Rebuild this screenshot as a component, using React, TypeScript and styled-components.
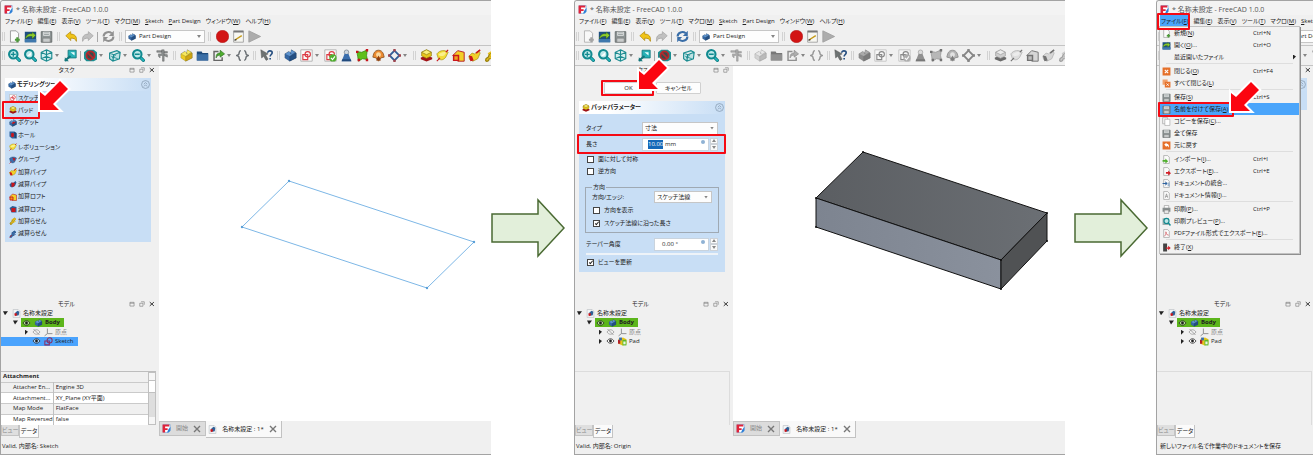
import React from "react";
import styled, { createGlobalStyle, css } from "styled-components";

const Global = createGlobalStyle`
  *, *::before, *::after { box-sizing: border-box; }
  body { margin: 0; background: #fff; }
  body, button, input, select, table {
    font-family: "Open Sans", "Noto Sans CJK JP", sans-serif;
    font-size: 6px;
    line-height: 9px;
    color: #222;
    font-feature-settings: "palt";
  }
  button { border: 0; padding: 0; margin: 0; background: none; white-space: nowrap; }
`;

/* ---------- page ---------- */
const Page = styled.main`
  display: grid;
  grid-template-columns: minmax(0, 491fr) 83fr minmax(0, 491fr) 91fr minmax(0, 157fr);
  min-height: 100vh;
`;
const Step = styled.div<{ $center?: boolean }>`
  display: flex;
  align-items: center;
  justify-content: ${(p) => (p.$center ? "center" : "flex-start")};
`;
const Window = styled.section`
  display: flex;
  flex-direction: column;
  background: #f0f0f0;
  border: solid #a3a3a3;
  border-width: 1px 0 1px 1px;
  border-top-left-radius: 3px;
  overflow: hidden;
`;
const TitleBar = styled.header`
  display: flex;
  align-items: center;
  gap: 3px;
  height: 14px;
  padding: 2px 0 0 3px;
  background: #f3f3f3;
  color: #555;
  font-size: 7px;
  white-space: nowrap;
`;
const MenuBar = styled.nav`
  display: flex;
  align-items: center;
  gap: 5px;
  height: 13px;
  padding-left: 4px;
  white-space: nowrap;
`;
const MenuHost = styled.div`
  position: relative;
`;
const MenuTitle = styled.button<{ $open?: boolean }>`
  display: block;
  height: 11px;
  ${(p) =>
    p.$open &&
    css`
      background: #4aa5fb;
      box-shadow: 0 0 0 1px #4aa5fb;
    `}
`;
const Toolbar = styled.div<{ $tall?: boolean }>`
  --grip: ${(p) => (p.$tall ? "8px" : "9px")};
  --sep: ${(p) => (p.$tall ? "4px" : "5px")};
  display: flex;
  align-items: center;
  height: ${(p) => (p.$tall ? "20px" : "18px")};
  border-bottom: 1px solid #c4c4c4;
  overflow: hidden;
`;
const Grip = styled.i`
  flex: none;
  width: var(--grip);
  height: 9px;
  background: linear-gradient(90deg, #d2d2d2 1px, transparent 1px 2px, #d2d2d2 2px) center / 3px 9px no-repeat;
  &:first-child { width: 5px; }
`;
const Sep = styled.i`
  flex: none;
  width: var(--sep);
  height: 10px;
  background: linear-gradient(#a8a8a8, #a8a8a8) center / 1px 100% no-repeat;
`;
const Tool = styled.button<{ $off?: boolean }>`
  flex: none;
  display: flex;
  align-items: center;
  justify-content: center;
  width: 16px;
  height: 16px;
  ${(p) => p.$off && css`filter: grayscale(1) opacity(0.7);`}
`;
const Caret = styled.i`
  flex: none;
  width: 8px;
  height: 3px;
  background: #858585;
  clip-path: polygon(1px 0, 5px 0, 3px 3px);
`;

/* ---------- combo boxes ---------- */
const Combo = styled.label<{ $w: number; $h?: number }>`
  flex: none;
  display: flex;
  align-items: center;
  width: ${(p) => p.$w}px;
  height: ${(p) => p.$h || 12}px;
  padding: 0 0 0 2px;
  background: #fdfdfd;
  border: 1px solid #c6c6c6;
  gap: 3px;
`;
const Select = styled.select`
  flex: 1;
  min-width: 0;
  height: 10px;
  padding: 0;
  appearance: none;
  border: 0;
  background: none;
`;

/* ---------- body ---------- */
const Body = styled.div`
  flex: 1;
  display: flex;
`;
const Dock = styled.aside`
  position: relative;
  flex: 0 0 158px;
  display: flex;
  flex-direction: column;
  background: #f0f0f0;
`;
const TaskArea = styled.div`
  flex: 1;
  padding-bottom: 12px;
`;
const DockTitle = styled.div`
  display: flex;
  align-items: center;
  height: 9px;
  padding: 0 3px;
  > span { flex: 1; text-align: center; }
`;
const DockButtons = styled.div`
  display: flex;
  gap: 3px;
`;
const DockButton = styled.button`
  width: 7px;
  height: 7px;
  display: flex;
`;
const Panel = styled.section`
  margin: 3px 8px 0 4px;
  background: #c8def5;
`;
const PanelHead = styled.h2`
  display: flex;
  align-items: center;
  gap: 1px;
  height: 13px;
  margin: 0;
  padding: 0 1px 0 3px;
  background: linear-gradient(90deg, #fff 20%, #c8def5);
  font-size: 6px;
  font-weight: 600;
  > span { flex: 1; }
`;
const TaskList = styled.div<{ $short?: boolean }>`
  display: grid;
  grid-auto-rows: 1fr;
  min-height: ${(p) => (p.$short ? "19px" : "151px")};
  padding: 1px 0 2px;
`;
const TaskItem = styled.div`
  position: relative;
  display: flex;
  align-items: center;
  > button { display: flex; align-items: center; gap: 1px; margin-left: 4px; }
`;
const Mark = styled.i<{ $l: number; $t: number; $w: number; $h: number }>`
  position: absolute;
  z-index: 4;
  left: ${(p) => p.$l}px;
  top: ${(p) => p.$t}px;
  width: ${(p) => p.$w}px;
  height: ${(p) => p.$h}px;
  border: 2px solid #f50a14;
  border-radius: 1px;
  pointer-events: none;
`;
const Pointer = styled.svg<{ $l: number; $t: number }>`
  position: absolute;
  z-index: 5;
  left: ${(p) => p.$l}px;
  top: ${(p) => p.$t}px;
  overflow: visible;
  pointer-events: none;
`;

/* ---------- pad form ---------- */
const Actions = styled.div`
  position: relative;
  display: flex;
  gap: 3px;
  margin: 7px 0 7px 29px;
`;
const PushButton = styled.button<{ $w: number }>`
  width: ${(p) => p.$w}px;
  height: 12px;
  background: #fdfdfd;
  border: 1px solid #d0d0d0;
  border-radius: 1px;
`;
const Form = styled.form`
  display: flex;
  flex-direction: column;
  gap: 2px;
  padding: 7px 7px 4px;
`;
const Field = styled.div<{ $h?: number }>`
  position: relative;
  display: flex;
  align-items: center;
  height: ${(p) => p.$h || 14}px;
  > label:first-child, > span:first-child { flex: 1; }
`;
const Spin = styled.div<{ $w: number }>`
  display: flex;
  align-items: center;
  width: ${(p) => p.$w}px;
  height: 13px;
  padding-left: 5px;
  background: #fff;
  border: 1px solid #c9d3dd;
  gap: 2px;
`;
const NumberBox = styled.input<{ $picked?: boolean }>`
  width: ${(p) => (p.$picked ? 15 : 20)}px;
  height: 9px;
  padding: 0;
  border: 0;
  text-align: center;
  background: ${(p) => (p.$picked ? "#1467b8" : "none")};
  color: ${(p) => (p.$picked ? "#fff" : "#222")};
`;
const Fx = styled.i`
  width: 4px;
  height: 4px;
  margin: 0 3px 5px auto;
  border-radius: 50%;
  background: #8fb2d4;
`;
const Steps = styled.div`
  display: flex;
  flex-direction: column;
  width: 8px;
  height: 13px;
  margin-left: 1px;
  > button {
    flex: 1;
    display: flex;
    align-items: center;
    justify-content: center;
    background: #fafafa;
    border: 1px solid #cdd2d8;
  }
`;
const Checks = styled.div`
  display: flex;
  flex-direction: column;
`;
const Check = styled.label`
  display: flex;
  align-items: center;
  gap: 4px;
  height: 12px;
  padding-left: 1px;
  > input {
    appearance: none;
    width: 7px;
    height: 7px;
    margin: 0;
    border: 1px solid #444;
    background: #fff;
  }
  > input:checked::after {
    content: "";
    display: block;
    width: 2px;
    height: 4px;
    margin-left: 2px;
    border: solid #222;
    border-width: 0 1px 1px 0;
    transform: rotate(40deg);
  }
`;
const Group = styled.fieldset`
  display: flex;
  flex-direction: column;
  gap: 1px;
  min-width: 0;
  margin: 4px -1px 2px;
  padding: 0 6px 3px;
  border: 1px solid #9fa9b3;
  > legend { height: 8px; line-height: 8px; padding: 0 1px; }
`;
const Rule = styled.hr`
  width: 100%;
  height: 2px;
  margin: 0 0 -1px;
  border: 0;
  background: #eef3f8;
`;

/* ---------- model tree ---------- */
const Tree = styled.div`
  display: grid;
  grid-template-rows: repeat(4, 1fr);
  justify-items: start;
  height: 37px;
  margin-bottom: 25px;
`;
const Node = styled.div<{ $depth: number; $tone?: string }>`
  display: flex;
  align-items: center;
  padding-left: ${(p) => p.$depth * 10}px;
  background: ${(p) => (p.$tone === "picked" ? "#4aa3fd" : "none")};
  color: ${(p) => (p.$tone === "dim" ? "#888" : "#222")};
`;
const Twist = styled.i<{ $open?: boolean }>`
  width: 10px;
  height: 5px;
  background: #222;
  clip-path: ${(p) => (p.$open ? "polygon(2px 0, 7px 0, 4px 4px)" : "polygon(4px 0, 7px 2px, 4px 5px)")};
`;
const NodeLabel = styled.span<{ $active?: boolean }>`
  display: flex;
  align-items: center;
  height: 9px;
  padding-right: 4px;
  background: ${(p) => (p.$active ? "#5cb51b" : "none")};
  font-weight: ${(p) => (p.$active ? 700 : 400)};
  > svg { width: 11px; margin-right: 1px; }
`;
const Props = styled.div<{ $empty?: boolean }>`
  display: flex;
  height: 54px;
  overflow: hidden;
  border-top: 1px solid ${(p) => (p.$empty ? "#dcdcdc" : "#bdbdbd")};
  margin-right: 3px;
  ${(p) => p.$empty && css`border-right: 1px solid #dcdcdc;`}
`;
const Table = styled.table`
  flex: 1;
  table-layout: fixed;
  border-collapse: collapse;
  td, th { height: 10px; padding: 0; text-align: left; font-weight: 400; line-height: 9px; white-space: nowrap; overflow: hidden; }
  thead th { height: 10px; padding-left: 2px; font-weight: 700; }
  tbody th { width: 51px; padding-left: 12px; border-right: 1px solid #c0c0c0; border-top: 1px solid #cacaca; }
  tbody td { padding-left: 2px; border-top: 1px solid #cacaca; }
  tbody tr:nth-child(even) { background: #fff; }
`;
const Scroll = styled.div`
  width: 8px;
  display: flex;
  flex-direction: column;
  background: #dedede;
  border: 1px solid #c0c0c0;
  > i { height: 7px; background: #f6f6f6; }
  > b { height: 13px; background: #fff; border: solid #c0c0c0; border-width: 1px 0; margin-bottom: auto; }
`;
const SideTabs = styled.div`
  display: flex;
  align-items: flex-start;
  height: 13px;
`;
const SideTab = styled.button<{ $on?: boolean }>`
  width: ${(p) => (p.$on ? 20 : 18)}px;
  height: ${(p) => (p.$on ? 13 : 11)}px;
  background: ${(p) => (p.$on ? "#fbfbfb" : "#dfdfdf")};
  color: ${(p) => (p.$on ? "#222" : "#888")};
  border: solid #c4c4c4;
  border-width: 0 1px 1px;
`;

/* ---------- 3D view ---------- */
const Work = styled.div`
  flex: 1;
  min-width: 0;
  display: flex;
  flex-direction: column;
`;
const Canvas = styled.svg`
  flex: 1;
  display: block;
  width: 100%;
  min-height: 0;
  background: #fff;
`;
const DocTabs = styled.div`
  display: flex;
  align-items: flex-start;
  height: 17px;
`;
const DocTab = styled.button<{ $on?: boolean }>`
  flex: none;
  display: flex;
  align-items: center;
  justify-content: space-between;
  width: ${(p) => (p.$on ? 76 : 47)}px;
  height: ${(p) => (p.$on ? 17 : 15)}px;
  padding: 0 4px 0 2px;
  background: ${(p) => (p.$on ? "#f9f9f9" : "#dcdcdc")};
  color: ${(p) => (p.$on ? "#222" : "#888")};
  border: solid #c2c2c2;
  border-width: ${(p) => (p.$on ? "0 1px 1px 0" : "1px")};
`;
const StatusBar = styled.footer<{ $hint?: boolean }>`
  height: 16px;
  padding-left: ${(p) => (p.$hint ? 3 : 1)}px;
  line-height: 16px;
  white-space: nowrap;
`;

/* ---------- file menu ---------- */
const Dropdown = styled.div`
  position: absolute;
  z-index: 3;
  top: 11px;
  left: -1px;
  width: 139px;
  background: #f2f2f2;
  box-shadow: 0 0 0 1px #c2c2c2, 1px 1px 0 1px #8f8f8f;
`;
const MenuRow = styled.div`
  position: relative;
`;
const MenuEntry = styled.button<{ $hot?: boolean }>`
  display: grid;
  grid-template-columns: 14px 79px 1fr;
  align-items: center;
  width: 100%;
  height: 12px;
  text-align: left;
  background: ${(p) => (p.$hot ? "#4aa5fb" : "none")};
  > svg { margin-left: 2px; }
`;
const Divider = styled.hr`
  height: 2px;
  margin: 0 6px;
  border: 0;
  border-top: 1px solid #dedede;
`;
const SubArrow = styled.i`
  width: 4px;
  height: 5px;
  margin-left: 40px;
  background: #222;
  clip-path: polygon(0 0, 3px 2px, 0 5px);
`;

/* ---------- icons ---------- */
const lens = (extra?: React.ReactNode) => (
  <>
    <path d="M9.500 9.500l4.500 4.500" stroke="#0f7a80" strokeWidth="4" strokeLinecap="round" />
    <path d="M9.500 9.500l4.500 4.500" stroke="#22b6bc" strokeWidth="2" strokeLinecap="round" />
    <circle cx="6.500" cy="6.500" r="5.200" fill="#bfe9ea" stroke="#128a90" strokeWidth="2.600" />
    {extra}
  </>
);
const block = (top: string, left: string, right: string) => (
  <g stroke="#1a2430" strokeOpacity=".35" strokeWidth=".6">
    <path d="M1 6l5-3v3l3-2V1l5 3 1 1v6l-8 4-6-4z" fill={left} />
    <path d="M1 6l5-3 2 1v2l2-1 4-1-7 5z" fill={top} />
    <path d="M9 1l5 3-4 2.500L8 5z" fill={top} />
    <path d="M7 9.500L15 5v6l-8 4z" fill={right} />
  </g>
);
const page = <path d="M3 1h7l3 3v11H3z" fill="#fbfbfb" stroke="#8b8b8b" />;
const floppy = (
  <>
    <path d="M1.500 2h13v13h-13z" fill="#8d9494" stroke="#5f6565" />
    <path d="M4 2h8v5H4z" fill="#e8eaea" />
    <path d="M5 3.500h6M5 5.500h6" stroke="#8d9494" />
    <path d="M3.500 10h9v5h-9z" fill="#c9cccc" stroke="#777" strokeWidth=".7" />
  </>
);
const sketchMark = (
  <g fill="none" stroke="#dc3a44" strokeWidth="1.400">
    <path d="M3.500 7h6v6h-6z" />
    <circle cx="9.500" cy="6.500" r="3.300" />
  </g>
);
const sketchPage = <path d="M1 1h14v14H1z" fill="#fafafa" stroke="#aaa" />;

const glyphs: Record<string, React.ReactNode> = {
  app: (
    <>
      <path d="M2 1h12.500v8L10 15H2z" fill="#fff" stroke="#5b95d6" />
      <path d="M1 1h12v3.500H5.500v3H10v3H5.500V15H1z" fill="#e0233a" />
      <path d="M9 15l2-5 4-5v7l-3 3z" fill="#2e7fd6" />
    </>
  ),
  fresh: <>{page}<path d="M11.500 9v6M8.500 12h6" stroke="#4e9a3a" strokeWidth="2.600" /></>,
  open: (
    <>
      <path d="M1 2h14v13H1z" fill="#1d4f80" />
      <path d="M2 9c2-4 5-5 8-4V2.500l4.500 4L10 11V8C7 7.500 4 8 2 11z" fill="#8fce2c" stroke="#2f5c10" strokeWidth=".5" />
      <path d="M1 11h14v4H1z" fill="#3f78ad" />
    </>
  ),
  save: floppy,
  undo: <path d="M1 7l6-5v3c5 0 8 3 7 9-1-3-3-4-7-4v3z" fill="#f0c419" stroke="#a98100" strokeWidth=".8" />,
  redo: <path d="M15 7L9 2v3c-5 0-8 3-7 9 1-3 3-4 7-4v3z" fill="#acacac" stroke="#7b7b7b" strokeWidth=".8" />,
  reload: (
    <>
      <path d="M2 8c0-5 6-7 10-4M14 8c0 5-6 7-10 4" fill="none" stroke="#3a6ea8" strokeWidth="2.600" />
      <path d="M14.500 1v6.500H8.500zM1.500 15V8.500h6z" fill="#3a6ea8" />
    </>
  ),
  record: <circle cx="8" cy="8" r="7.700" fill="#d21414" stroke="#a80f0f" strokeWidth=".6" />,
  macro: (
    <>
      <path d="M2 1h12v14H2z" fill="#f7f7f2" stroke="#999" />
      <path d="M2 2h12" stroke="#777" strokeWidth="2" />
      <path d="M4 12l8-5" stroke="#c59a1a" strokeWidth="1.800" />
      <path d="M3 12.500l2.500-.5" stroke="#222" strokeWidth="1.500" />
    </>
  ),
  play: <path d="M1 1L15.500 8 1 15z" fill="#8f8f8f" stroke="#7d7d7d" />,
  zoomFit: lens(<path d="M6.500 3.500v6M3.500 6.500h6" stroke="#128a90" strokeWidth="1.600" />),
  zoomSel: lens(<path d="M3.500 9l5-5v4z" fill="#fff" />),
  cube: (
    <path d="M8 1l6.500 3v8L8 15l-6.500-3V4zM1.500 4L8 7l6.500-3M8 7v8M8 1v6M1.500 12L8 9l6.500 3" fill="#d3eeee" stroke="#1b8b90" strokeWidth="1.400" />
  ),
  link: (
    <>
      <path d="M5 1.500h10V11H5z" fill="#27b0b5" stroke="#13767b" />
      <path d="M8 4h5v4z" fill="#e8ffff" />
      <path d="M1 14.500l7-6" stroke="#13767b" strokeWidth="2.400" />
      <path d="M1 10v5h5z" fill="#13767b" />
    </>
  ),
  deny: (
    <>
      <path d="M4 1h8l4 3v9l-4 2H3l-3-3V4z" fill="#1b8f92" />
      <circle cx="8" cy="8" r="5" fill="#3b4a4a" stroke="#b5282c" strokeWidth="2.200" />
      <path d="M4.500 4.500l7 7" stroke="#b5282c" strokeWidth="2.200" />
    </>
  ),
  wire: (
    <>
      <path d="M2 5l9-3 4 2-1 8-8 3-4-3zM2 5l5 2 8-3M7 7l-1 8" fill="#bfe3e4" stroke="#1b8b90" strokeWidth="1.400" />
      <path d="M5 11l5-4M4 9l8 3" stroke="#1b8b90" />
    </>
  ),
  zoomPage: lens(<path d="M3.500 6.500h6" stroke="#128a90" strokeWidth="2" />),
  caliper: (
    <path d="M7 1h3v14H8V8H5v3L3 9V6h4zM10 3h4v2h-4zM10 6l4 1v3l-4-2zM1 2h6v2H1z" fill="#8b9090" stroke="#666" strokeWidth=".6" />
  ),
  part: block("#f8e95e", "#edcb22", "#cfa512"),
  folder: <><path d="M1 3h6l1 2h7v9H1z" fill="#1f4b7c" /><path d="M1 6.500h14V14H1z" fill="#3c6fa6" /></>,
  share: (
    <>
      <path d="M8 3H2.500v11h10V10" fill="none" stroke="#666" strokeWidth="1.800" />
      <path d="M5 11c0-5 2-6 5-6V1.500L15.500 6 10 10V7.500c-2 0-4 1-5 3.500z" fill="#4fae2e" stroke="#24631a" strokeWidth=".7" />
    </>
  ),
  braces: (
    <path d="M6 2C3 2 4.500 6 3 7L1 8l2 1c1.500 1 0 5 3 5M10 2c3 0 1.500 4 3 5l2 1-2 1c-1.500 1 0 5-3 5" fill="none" stroke="#6b7074" strokeWidth="1.800" />
  ),
  help: (
    <>
      <path d="M1 1l9 5-3 1.500 3 5-2.500 1.500-3-5L2 11z" fill="#6d7272" stroke="#555" strokeWidth=".6" />
      <path d="M9.500 4.500c0-3 5.500-3 5.500.2 0 2-2.500 2.300-2.500 4.600M12.500 11v2" fill="none" stroke="#274f80" strokeWidth="2" />
    </>
  ),
  body: block("#5f94cf", "#3568a5", "#234f84"),
  sketch: <>{sketchPage}{sketchMark}</>,
  sketchOk: <>{sketchPage}{sketchMark}<circle cx="11" cy="11" r="4.500" fill="#4fae2e" /><path d="M8.500 11l2 2 3-4" stroke="#fff" strokeWidth="1.400" fill="none" /></>,
  weight: (
    <>
      <circle cx="8" cy="4" r="2.800" fill="#ccd5de" stroke="#7e8894" />
      <path d="M5.500 6h5L14 15H2z" fill="#3a6dac" />
      <path d="M2.800 12.500h10.400L14 15H2z" fill="#224a7c" />
    </>
  ),
  patch: (
    <>
      <path d="M1 3l6 1 7-3-1 7 1 5-6-1-5 3-1-6z" fill="#5fbf1b" stroke="#2c7d0b" strokeWidth=".8" />
      <path d="M0 2h3v3H0zM12 0h3v3h-3zM12 12h3v3h-3zM2 12h3v3H2z" fill="#c4161c" />
    </>
  ),
  datum: (
    <>
      <path d="M2 6c2-6 10-6 12 0l1 4-4 1-3 4-3-4-4-1z" fill="#ec8a30" stroke="#8a5422" />
      <circle cx="8" cy="7" r="3" fill="#fbd9a0" />
      <path d="M8 8l3 6H5z" fill="#8c3c10" />
    </>
  ),
  diamond: (
    <>
      <path d="M8 2l6 6-6 6-6-6z" fill="none" stroke="#2f5f9a" strokeWidth="2.200" />
      <path d="M6.500 0h3v3h-3zM6.500 13h3v3h-3zM0 6.500h3v3H0zM13 6.500h3v3h-3z" fill="#a0464e" />
    </>
  ),
  pad: (
    <>
      <path d="M1 10.500l7-2 7 2v2l-7 3-7-3z" fill="#a01317" />
      <path d="M2 4l6-3 6 3v4.500l-6 3-6-3z" fill="#e8c51b" stroke="#8b7510" strokeWidth=".8" />
      <path d="M2 4l6-3 6 3-6 3z" fill="#faef78" stroke="#8b7510" strokeWidth=".8" />
    </>
  ),
  pocket: <>{block("#5f94cf", "#3568a5", "#234f84")}<path d="M5 8l5-3 3 2-5 3z" fill="#c9161c" /></>,
  hole: (
    <>
      <path d="M1 1h9l5 3v11H6l-5-4z" fill="#2f629c" />
      <ellipse cx="7" cy="8" rx="3" ry="4.500" fill="#c9161c" />
      <path d="M10 1l5 3v11l-4-2z" fill="#1f4675" />
    </>
  ),
  revolve: (
    <>
      <path d="M1 6c4-5 10-5 14-2l-3 6c-3 4-6 4-9 2z" fill="#f3de3a" stroke="#a38c14" strokeWidth=".8" />
      <path d="M3 7c3-3 6-4 10-3l-3 4c-3 1-5 1-7-1z" fill="#faf08c" />
      <path d="M1 15l4-4M12 4l3-3" stroke="#c9161c" strokeWidth="1.400" />
    </>
  ),
  groove: (
    <>
      <path d="M1 5c4-4 10-4 14-1l-3 7c-3 4-6 3-9 1z" fill="#3a70ae" stroke="#1f4675" strokeWidth=".8" />
      <path d="M7 3l6 2-3 6z" fill="#c9161c" />
      <path d="M1 15l4-4" stroke="#c9161c" strokeWidth="1.400" />
    </>
  ),
  loft: (
    <>
      <path d="M1 8l6-6 8 2v11H7z" fill="#f3cf28" stroke="#b8242a" strokeWidth="1.200" />
      <path d="M2 8h6v6H2z" fill="#f0a01f" stroke="#c9161c" strokeWidth="1.800" />
    </>
  ),
  loftCut: (
    <>
      <path d="M1 6l6-4 8 2v11H5z" fill="#2d5b92" />
      <path d="M5 6h8v8H5z" fill="#c9161c" />
    </>
  ),
  pipe: (
    <>
      <path d="M1 9l4-4 3 1 5-4 2 3-3 7-6 3-4-2z" fill="#f1d02a" stroke="#a38c14" strokeWidth=".8" />
      <path d="M1 8l4 1 2 5-4 1z" fill="#c9161c" />
      <path d="M10 5l5-4" stroke="#c9161c" strokeWidth="2" />
    </>
  ),
  pipeCut: (
    <>
      <path d="M1 9l4-4 3 1 5-4 2 3-3 7-6 3-4-2z" fill="#2d5b92" />
      <path d="M5 5l7 1-2 7-5 1z" fill="#c9161c" />
    </>
  ),
  helix: (
    <>
      <path d="M2 14c0-5 4-2 4-6s4-2 4-5 3 0 3 2-4 2-4 5-3 1-3 3-3 3-4 1z" fill="#e6bf1b" stroke="#9a8210" strokeWidth="1.600" />
      <path d="M5 6l5-3 4 2M7 11l6-2" stroke="#e6bf1b" strokeWidth="2" />
    </>
  ),
  helixCut: (
    <>
      <path d="M2 14c0-5 4-2 4-6s4-2 4-5 3 0 3 2-4 2-4 5-3 1-3 3-3 3-4 1z" fill="#3a6dac" stroke="#2d5b92" strokeWidth="1.600" />
      <path d="M5 6l5-3 4 2M7 11l6-2" stroke="#2d5b92" strokeWidth="2" />
      <path d="M1 15l5-5" stroke="#c9161c" strokeWidth="1.400" />
    </>
  ),
  doc: (
    <>
      <path d="M2 1h9l3 3v11H2z" fill="#f4f6f8" stroke="#b0b5ba" />
      <path d="M6 6l4-3 3 2-1 6-4 1-2-2z" fill="#2f5f96" />
      <path d="M4 8l4-1 1 4-4 2z" fill="#c9161c" />
    </>
  ),
  eye: (
    <>
      <path d="M1 8c4-6 10-6 14 0-4 6-10 6-14 0z" fill="#fff" fillOpacity=".5" stroke="#222" strokeWidth="1.500" />
      <circle cx="8" cy="8" r="2.800" fill="#222" />
    </>
  ),
  eyeOff: (
    <>
      <path d="M1 8c4-6 10-6 14 0-4 6-10 6-14 0z" fill="none" stroke="#888" strokeWidth="1.300" />
      <path d="M2 2l12 12" stroke="#888" strokeWidth="1.400" />
    </>
  ),
  axes: <path d="M6 1v9h9M6 10l-5 4" fill="none" stroke="#888" strokeWidth="1.600" />,
  sketchNode: (
    <g fill="none" stroke="#8a2f63" strokeWidth="1.800">
      <path d="M1.500 7h8v7h-8z" />
      <circle cx="10" cy="6" r="4.500" />
    </g>
  ),
  padNode: (
    <>
      <path d="M1 3l8-2 6 3v9l-7 2-7-3z" fill="#e8c51b" />
      <path d="M0 5h4v7H0z" fill="#b32025" />
      <path d="M2 1h5v5H2z" fill="#3a6dac" />
      <path d="M8 5h7v10H8z" fill="#5cb92c" />
      <path d="M9.500 8h4v5h-4z" fill="#eaf6e2" />
    </>
  ),
  close: <><path d="M1 1h14v14H1z" fill="#e5702a" /><path d="M5 5l6 6M11 5l-6 6" stroke="#fff" strokeWidth="2" /></>,
  closeAll: <><path d="M1 1h9v9H1z" fill="#f0a06c" /><path d="M5 5h10v10H5z" fill="#e5702a" /><path d="M8 8l4 4M12 8l-4 4" stroke="#fff" strokeWidth="1.600" /></>,
  copy: <><path d="M1 1h9v11H1z" fill="#eee" stroke="#999" /><path d="M5 4h9v11H5z" fill="#fff" stroke="#999" /></>,
  revert: <><path d="M1 1h14v14H1z" fill="#e5702a" /><path d="M4 6l4-3v2c4 0 5 3 4 7-1-3-2-3-4-3v2z" fill="#fff" /></>,
  importFile: <>{page}<path d="M1 9h5V6l5 5-5 4v-3H1z" fill="#4fae2e" /></>,
  exportFile: <>{page}<path d="M7 9h4V6l5 5-5 4v-3H7z" fill="#d32029" /></>,
  merge: <>{page}<path d="M1 7h5V4l4 4-4 4V9H1z" fill="#2f639f" /><path d="M10 6h4v7h-4z" fill="#9bb3cd" /></>,
  info: <>{page}<path d="M6 12l2-7 2 7M6 9.500h4" stroke="#888" strokeWidth="1.200" fill="none" /></>,
  print: <><path d="M4 1h8v5H4z" fill="#fff" stroke="#888" /><path d="M1 5h14v7H1z" fill="#8a9090" /><path d="M4 9h8v6H4z" fill="#e8e8e8" stroke="#777" /></>,
  preview: <><path d="M1 2h11v12H1z" fill="#9aabab" /><circle cx="8" cy="7" r="4.500" fill="#bfe6e6" stroke="#128a90" strokeWidth="2" /><path d="M11 10l4 5" stroke="#128a90" strokeWidth="2.500" /></>,
  pdf: <>{page}<path d="M4 13c4-3 4-8 3-8s0 6 5 6" fill="none" stroke="#d0535a" strokeWidth="1.300" /></>,
  quit: <><path d="M2 1h7v14H2z" fill="#444" /><path d="M7 8h4V5l4.500 4-4.500 4v-3H7z" fill="#d32029" /></>,
  x: <path d="M2 2l12 12M14 2L2 14" stroke="#777" strokeWidth="2.800" />,
  float: <path d="M2.500 3.500h11v10h-11zM2.500 6h11" fill="none" stroke="#777" strokeWidth="1.600" />,
  restore: <path d="M5.500 2h8.500v8M2 6h8.500v8H2z" fill="none" stroke="#777" strokeWidth="1.600" />,
  shut: <path d="M2 3l11 10M13 3L2 13" stroke="#333" strokeWidth="2.600" />,
  fold: (
    <g fill="none" stroke="#7f93a8" strokeWidth="1.200">
      <circle cx="8" cy="8" r="7" />
      <path d="M5 7.500l3-3 3 3M5 11.500l3-3 3 3" />
    </g>
  ),
};

const Icon = ({ name, size = 12 }: { name: string; size?: number }) => (
  <svg width={size} height={size} viewBox="0 0 16 16" fill="none" aria-hidden="true">
    {glyphs[name]}
  </svg>
);

const RedArrow = ({ l, t }: { l: number; t: number }) => (
  <Pointer $l={l} $t={t} width="34" height="34" viewBox="0 0 34 34" aria-hidden="true">
    <path
      d="M2 31V13l5 4L22 2l8 8-15 15 6 6z"
      fill="#fb0510"
      stroke="#fff"
      strokeWidth="4"
      paintOrder="stroke"
      strokeLinejoin="miter"
    />
  </Pointer>
);

const GreenArrow = () => (
  <svg width="74" height="60" viewBox="0 0 74 60" aria-hidden="true">
    <path d="M1 16h46V2l26 28-26 28V44H1z" fill="#e2efda" stroke="#4a6a33" strokeWidth="1.500" />
  </svg>
);

/* ---------- shared window parts ---------- */
const K = ({ children }: { children: string }) => (
  <>
    (<u>{children}</u>)
  </>
);

const menus: [string, React.ReactNode][] = [
  ["file", <>ファイル<K>F</K></>],
  ["edit", <>編集<K>E</K></>],
  ["view", <>表示<K>V</K></>],
  ["tools", <>ツール<K>T</K></>],
  ["macro", <>マクロ<K>M</K></>],
  ["sketch", <><u>S</u>ketch</>],
  ["part", <><u>P</u>art Design</>],
  ["window", <>ウィンドウ<K>W</K></>],
  ["help", <>ヘルプ<K>H</K></>],
];

const mainTools = ["|", "fresh", "open", "save", "|", "undo", "redo", "/", "reload", "|", "combo", "|", "record", "macro", "play"];
const viewTools = [
  "|", "zoomFit", "zoomSel", "cube", "v", "link", "/", "deny", "v", "wire", "v", "zoomPage", "v", "caliper",
  "|", "part", "folder", "share", "v", "braces", "|", "help", "|", "body", "sketch", "v", "sketchOk", "weight",
  "patch", "datum", "diamond", "v", "|", "pad", "revolve", "loft", "pipe", "helix",
];

const Tools = ({ items, off, tall }: { items: string[]; off: string[]; tall?: boolean }) => (
  <Toolbar $tall={tall}>
    {items.map((t, i) => {
      if (t === "|") return <Grip key={i} />;
      if (t === "/") return <Sep key={i} />;
      if (t === "v") return <Caret key={i} />;
      if (t === "combo")
        return (
          <Combo key={i} $w={80} $h={13}>
            <Icon name="body" size={8} />
            <Select aria-label="Workbench">
              <option>Part Design</option>
            </Select>
            <Caret />
          </Combo>
        );
      return (
        <Tool key={i} aria-label={t} $off={off.includes(t)}>
          <Icon name={t} size={13} />
        </Tool>
      );
    })}
  </Toolbar>
);

const DockHead = ({ title, icons = ["float", "restore", "shut"] }: { title: string; icons?: string[] }) => (
  <DockTitle>
    <span>{title}</span>
    <DockButtons>
      {icons.map((n) => (
        <DockButton key={n} aria-label={n}>
          <Icon name={n} size={6} />
        </DockButton>
      ))}
    </DockButtons>
  </DockTitle>
);

const Model = ({ sketch }: { sketch?: boolean }) => (
  <section>
    <DockHead title="モデル" />
    <Tree>
      <Node $depth={0}>
        <Twist $open />
        <NodeLabel>
          <Icon name="doc" size={9} />
          <span>名称未設定</span>
        </NodeLabel>
      </Node>
      <Node $depth={1}>
        <Twist $open />
        <NodeLabel $active>
          <Icon name="eye" size={8} />
          <Icon name="body" size={8} />
          Body
        </NodeLabel>
      </Node>
      <Node $depth={2} $tone="dim">
        <Twist />
        <NodeLabel>
          <Icon name="eyeOff" size={8} />
          <Icon name="axes" size={9} />
          原点
        </NodeLabel>
      </Node>
      {sketch ? (
        <Node $depth={3} $tone="picked">
          <NodeLabel>
            <Icon name="eye" size={8} />
            <Icon name="sketchNode" size={9} />
            Sketch
          </NodeLabel>
        </Node>
      ) : (
        <Node $depth={2}>
          <Twist />
          <NodeLabel>
            <Icon name="eye" size={8} />
            <Icon name="padNode" size={9} />
            Pad
          </NodeLabel>
        </Node>
      )}
    </Tree>
    {sketch ? (
      <Props>
        <Table>
          <thead>
            <tr>
              <th colSpan={2}>Attachment</th>
            </tr>
          </thead>
          <tbody>
            {[
              ["Attacher En...", "Engine 3D"],
              ["Attachment...", "XY_Plane (XY平面)"],
              ["Map Mode", "FlatFace"],
              ["Map Reversed", "false"],
            ].map(([k, v]) => (
              <tr key={k}>
                <th>{k}</th>
                <td>{v}</td>
              </tr>
            ))}
          </tbody>
        </Table>
        <Scroll>
          <i />
          <b />
          <i />
        </Scroll>
      </Props>
    ) : (
      <Props $empty />
    )}
    <SideTabs>
      <SideTab>ビュー</SideTab>
      <SideTab $on>データ</SideTab>
    </SideTabs>
  </section>
);

const tasks: [string, string][] = [
  ["sketch", "スケッチを編集"],
  ["pad", "パッド"],
  ["pocket", "ポケット"],
  ["hole", "ホール"],
  ["revolve", "レボリューション"],
  ["groove", "グルーブ"],
  ["pipe", "加算パイプ"],
  ["pipeCut", "減算パイプ"],
  ["loft", "加算ロフト"],
  ["loftCut", "減算ロフト"],
  ["helix", "加算らせん"],
  ["helixCut", "減算らせん"],
];

const Frame = ({
  off,
  fileMenu,
  dock,
  sketch,
  scene,
  status,
}: {
  off: string[];
  fileMenu?: React.ReactNode;
  dock: React.ReactNode;
  sketch?: boolean;
  scene?: React.ReactNode;
  status: string;
}) => (
  <Window>
    <TitleBar>
      <Icon name="app" size={9} />* 名称未設定 - FreeCAD 1.0.0
    </TitleBar>
    <MenuBar>
      {(fileMenu ? menus.slice(0, 6) : menus).map(([id, label]) => (
        <MenuHost key={id}>
          <MenuTitle $open={id === "file" && !!fileMenu}>{label}</MenuTitle>
          {id === "file" && fileMenu}
        </MenuHost>
      ))}
    </MenuBar>
    <Tools items={mainTools} off={off} />
    <Tools items={viewTools} off={off} tall />
    <Body>
      <Dock>
        <TaskArea>{dock}</TaskArea>
        <Model sketch={sketch} />
      </Dock>
      {scene && (
        <Work>
          <Canvas viewBox="0 0 332 355" preserveAspectRatio="xMinYMin meet">
            {scene}
          </Canvas>
          <DocTabs>
            <DocTab>
              <Icon name="app" size={9} />
              開始
              <Icon name="x" size={8} />
            </DocTab>
            <DocTab $on>
              <Icon name="doc" size={9} />
              名称未設定 : 1*
              <Icon name="x" size={8} />
            </DocTab>
          </DocTabs>
        </Work>
      )}
    </Body>
    <StatusBar $hint={!!fileMenu}>{status}</StatusBar>
  </Window>
);

const SketchScene = (
  <>
    <path d="M130 115L315 176L268 222L83 161z" fill="none" stroke="#7db7e6" />
    {[[130, 115], [315, 176], [268, 222], [83, 161]].map(([x, y]) => (
      <circle key={x} cx={x} cy={y} r="1.200" fill="#5a9fd8" />
    ))}
  </>
);

const SolidScene = (
  <>
    <defs>
      <linearGradient id="topFace" x1="0" x2="1">
        <stop offset="0" stopColor="#5b5e62" />
        <stop offset="1" stopColor="#6b6f74" />
      </linearGradient>
      <linearGradient id="frontFace" x1="0" x2="1">
        <stop offset="0" stopColor="#7d8490" />
        <stop offset="1" stopColor="#8a919d" />
      </linearGradient>
    </defs>
    <g stroke="#111" strokeLinejoin="round">
      <path d="M130 86L314 147L268 194L83 132z" fill="url(#topFace)" />
      <path d="M83 132L268 194V223L83 161z" fill="url(#frontFace)" />
      <path d="M268 194L314 147V175L268 223z" fill="#505254" />
    </g>
    {[[130, 86], [314, 147], [268, 194], [83, 132], [268, 223], [83, 161], [314, 175]].map(([x, y]) => (
      <circle key={`${x}-${y}`} cx={x} cy={y} r="1" fill="#111" />
    ))}
  </>
);

const TaskPanel = ({ marked, short }: { marked?: boolean; short?: boolean }) => (
  <>
    <DockHead title="タスク" />
    <Panel>
      <PanelHead>
        <Icon name="body" size={8} />
        <span>{short ? "" : "モデリングツール"}</span>
        <Icon name="fold" size={9} />
      </PanelHead>
      <TaskList $short={short}>
        {(short ? [] : tasks).map(([icon, label]) => (
          <TaskItem key={label}>
            <button>
              <Icon name={icon} size={8} />
              {label}
            </button>
            {marked && icon === "pad" && (
              <>
                <Mark $l={-3} $t={-3} $w={38} $h={18} />
                <RedArrow l={33} t={-25} />
              </>
            )}
          </TaskItem>
        ))}
      </TaskList>
    </Panel>
  </>
);

const ArrowSteps = () => (
  <Steps>
    <button type="button" aria-label="+">
      <svg width="4" height="3" viewBox="0 0 4 3"><path d="M0 3l2-3 2 3z" fill="#888" /></svg>
    </button>
    <button type="button" aria-label="-">
      <svg width="4" height="3" viewBox="0 0 4 3"><path d="M0 0l2 3 2-3z" fill="#888" /></svg>
    </button>
  </Steps>
);

const PadPanel = () => (
  <>
    <DockHead title="タスク" icons={["float", "restore"]} />
    <Actions>
      <PushButton $w={49}>OK</PushButton>
      <PushButton $w={45}>キャンセル</PushButton>
      <Mark $l={-3} $t={-2} $w={53} $h={16} />
      <RedArrow l={33} t={-24} />
    </Actions>
    <Panel>
      <PanelHead>
        <Icon name="pad" size={8} />
        <span>パッドパラメーター</span>
        <Icon name="fold" size={9} />
      </PanelHead>
      <Form onSubmit={(e) => e.preventDefault()}>
        <Field>
          <span>タイプ</span>
          <Combo $w={76} $h={13}>
            <Select aria-label="タイプ">
              <option>寸法</option>
            </Select>
            <Caret />
          </Combo>
        </Field>
        <Field>
          <label htmlFor="len">長さ</label>
          <Spin $w={67}>
            <NumberBox id="len" defaultValue="10.00" $picked />
            <span>mm</span>
            <Fx />
          </Spin>
          <ArrowSteps />
          <Mark $l={-9} $t={-3} $w={149} $h={20} />
        </Field>
        <Checks>
          <Check><input type="checkbox" />面に対して対称</Check>
          <Check><input type="checkbox" />逆方向</Check>
        </Checks>
        <Group>
          <legend>方向</legend>
          <Field $h={12}>
            <span>方向/エッジ:</span>
            <Combo $w={58}>
              <Select aria-label="方向/エッジ">
                <option>スケッチ法線</option>
              </Select>
              <Caret />
            </Combo>
          </Field>
          <Check><input type="checkbox" />方向を表示</Check>
          <Check><input type="checkbox" defaultChecked />スケッチ法線に沿った長さ</Check>
        </Group>
        <Field>
          <label htmlFor="taper">テーパー角度</label>
          <Spin $w={55}>
            <NumberBox id="taper" defaultValue="0.00 °" />
            <Fx />
          </Spin>
          <ArrowSteps />
        </Field>
        <Rule />
        <Check><input type="checkbox" defaultChecked />ビューを更新</Check>
      </Form>
    </Panel>
  </>
);

type Entry = [string, React.ReactNode, string?];
const fileGroups: Entry[][] = [
  [
    ["fresh", <>新規<K>N</K></>, "Ctrl+N"],
    ["open", <>開く<K>O</K>...</>, "Ctrl+O"],
    ["", <>最近開いたファイル</>, "sub"],
  ],
  [
    ["close", <>閉じる<K>O</K></>, "Ctrl+F4"],
    ["closeAll", <>すべて閉じる<K>L</K></>],
  ],
  [
    ["save", <>保存<K>S</K></>, "Ctrl+S"],
    ["save", <>名前を付けて保存<K>A</K></>, "hot"],
    ["copy", <>コピーを保存<K>C</K>...</>],
    ["save", <>全て保存</>],
    ["revert", <>元に戻す</>],
  ],
  [
    ["importFile", <>インポート<K>I</K>...</>, "Ctrl+I"],
    ["exportFile", <>エクスポート<K>E</K>...</>, "Ctrl+E"],
    ["merge", <>ドキュメントの統合...</>],
    ["info", <>ドキュメント情報<K>I</K>...</>],
  ],
  [
    ["print", <>印刷<K>P</K>...</>, "Ctrl+P"],
    ["preview", <>印刷プレビュー<K>P</K>...</>],
    ["pdf", <>PDFファイル形式でエクスポート<K>E</K>...</>],
  ],
  [["quit", <>終了<K>X</K></>]],
];

const FileMenu = () => (
  <>
    <Mark $l={-4} $t={-3} $w={33} $h={17} />
    <Dropdown>
      {fileGroups.map((group, g) => (
        <React.Fragment key={g}>
          {g > 0 && <Divider />}
          {group.map(([icon, label, extra], i) => (
            <MenuRow key={i}>
              <MenuEntry $hot={extra === "hot"}>
                {icon ? <Icon name={icon} size={9} /> : <span />}
                <span>{label}</span>
                {extra === "sub" ? <SubArrow /> : <span>{extra === "hot" ? "" : extra}</span>}
              </MenuEntry>
              {extra === "hot" && (
                <>
                  <Mark $l={-2} $t={-1} $w={76} $h={15} />
                  <RedArrow l={69} t={-23} />
                </>
              )}
            </MenuRow>
          ))}
        </React.Fragment>
      ))}
    </Dropdown>
  </>
);

const padOff = [
  "fresh", "redo", "play", "caliper", "part", "folder", "share", "braces", "body", "sketch", "sketchOk", "weight",
  "patch", "datum", "diamond", "pad", "revolve", "loft", "pipe", "helix",
];

export default function App() {
  return (
    <>
      <Global />
      <Page>
        <Frame off={["reload", "play", "redo"]} dock={<TaskPanel marked />} sketch scene={SketchScene} status="Valid, 内部名: Sketch" />
        <Step>
          <GreenArrow />
        </Step>
        <Frame off={padOff} dock={<PadPanel />} scene={SolidScene} status="Valid, 内部名: Origin" />
        <Step $center>
          <GreenArrow />
        </Step>
        <Frame
          off={["redo", "play"]}
          fileMenu={<FileMenu />}
          dock={<TaskPanel short />}
          status="新しいファイル名で作業中のドキュメントを保存"
        />
      </Page>
    </>
  );
}
